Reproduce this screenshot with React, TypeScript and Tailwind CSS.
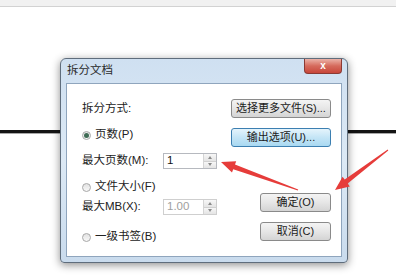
import React from 'react';

const font = { fontFamily: '"Liberation Sans", "Noto Sans CJK SC", sans-serif' };

const WinButton = ({ label, width, active = false }: { label: string; width: string; active?: boolean }) => (
  <div
    className={`${width} h-[19px] flex items-center justify-center rounded-[3px] border text-[11px] leading-none ${
      active
        ? 'border-[#3c7fb1] bg-gradient-to-b from-[#e5f4fc] via-[#c4e5f6] to-[#a9d9f2] text-[#1b1b1b]'
        : 'border-[#8a8a8a] bg-gradient-to-b from-[#f4f4f4] via-[#e6e6e6] to-[#d4d4d4] text-[#1b1b1b]'
    }`}
  >
    {label}
  </div>
);

const Radio = ({ checked = false, label }: { checked?: boolean; label: string }) => (
  <div className="h-[16px] flex items-center gap-[4px] text-[11.5px] text-[#222]">
    <span className="w-[9px] h-[9px] rounded-full border border-[#a8a8a8] bg-gradient-to-b from-[#e2e2e2] to-[#f8f8f8] flex items-center justify-center">
      {checked && <span className="w-[5px] h-[5px] rounded-full bg-[#3f6b55]" />}
    </span>
    <span>{label}</span>
  </div>
);

const SpinBox = ({ value, disabled = false }: { value: string; disabled?: boolean }) => (
  <div
    className={`w-[54px] h-[16px] flex border bg-white ${disabled ? 'border-[#cfcfcf]' : 'border-[#b6b9bf]'}`}
  >
    <div className={`flex-1 flex items-center pl-[3px] text-[11.5px] ${disabled ? 'text-[#a0a0a0]' : 'text-[#111]'}`}>
      {value}
    </div>
    <div className="w-[13px] flex flex-col border-l border-[#d4d4d4]">
      <div className="flex-1 flex items-center justify-center bg-gradient-to-b from-[#f7f7f7] to-[#e4e4e4] border-b border-[#d0d0d0]">
        <span className="w-0 h-0 border-l-[2.5px] border-r-[2.5px] border-b-[3px] border-l-transparent border-r-transparent border-b-[#8a8a8a]" />
      </div>
      <div className="flex-1 flex items-center justify-center bg-gradient-to-b from-[#f7f7f7] to-[#e4e4e4]">
        <span className="w-0 h-0 border-l-[2.5px] border-r-[2.5px] border-t-[3px] border-l-transparent border-r-transparent border-t-[#8a8a8a]" />
      </div>
    </div>
  </div>
);

const FieldRow = ({ label, value, disabled }: { label: string; value: string; disabled?: boolean }) => (
  <div className="h-[16px] flex items-center text-[11.5px] text-[#222]">
    <span className="w-[81px]">{label}</span>
    <SpinBox value={value} disabled={disabled} />
  </div>
);

export default function App() {
  return (
    <div className="relative w-[396px] h-[278px] bg-white overflow-hidden" style={font}>
      <div className="h-[7px] bg-[#f1f1f1] border-b border-[#d2d2d2]" />

      {/* line behind the dialog */}
      <div className="absolute left-0 right-0 top-[130px] flex flex-col">
        <div className="h-[3px] bg-[#141414]" />
        <div className="h-[1px] bg-[#a8a8a8]" />
      </div>

      <div className="relative ml-[60px] mt-[51px] w-[288px] h-[205px] rounded-t-[6px] rounded-b-[4px] border border-[#5f6d7c] bg-gradient-to-b from-[#cfe0f1] via-[#dce9f5] to-[#c9dbed] shadow-[0_2px_8px_rgba(0,0,0,0.45)] flex flex-col">
        <div className="h-[24px] flex items-center justify-between pl-[6px] pr-[5px]">
          <span className="text-[11.5px] text-[#2b2b2b] leading-none">拆分文档</span>
          <div className="self-start w-[38px] h-[15px] rounded-b-[4px] border border-t-0 border-[#8a3a34] bg-gradient-to-b from-[#eab2a8] via-[#d56a5c] to-[#c8463a] flex items-center justify-center">
            <span className="text-white text-[10px] font-bold leading-none">x</span>
          </div>
        </div>

        <div className="mx-[5px] h-[174px] bg-white border border-[#8fa5bd] flex justify-between pl-[15px] pr-[10px]">
          <div className="flex flex-col">
            <div className="mt-[17px] h-[16px] flex items-center text-[11.5px] text-[#222]">拆分方式:</div>
            <div className="mt-[10px]">
              <Radio checked label="页数(P)" />
            </div>
            <div className="mt-[10px]">
              <FieldRow label="最大页数(M):" value="1" />
            </div>
            <div className="mt-[10px]">
              <Radio label="文件大小(F)" />
            </div>
            <div className="mt-[4px]">
              <FieldRow label="最大MB(X):" value="1.00" disabled />
            </div>
            <div className="mt-[14px]">
              <Radio label="一级书签(B)" />
            </div>
          </div>

          <div className="flex flex-col items-end">
            <div className="mt-[15px]">
              <WinButton label="选择更多文件(S)..." width="w-[100px]" />
            </div>
            <div className="mt-[10px]">
              <WinButton label="输出选项(U)..." width="w-[100px]" active />
            </div>
            <div className="mt-[46px]">
              <WinButton label="确定(O)" width="w-[71px]" />
            </div>
            <div className="mt-[10px]">
              <WinButton label="取消(C)" width="w-[71px]" />
            </div>
          </div>
        </div>
      </div>

      {/* red annotation arrows */}
      <svg className="absolute inset-0 pointer-events-none" width="396" height="278" viewBox="0 0 396 278">
        <polygon
          points="221,162 236.2,161.2 235,164.5 298.2,189.5 297.8,190.5 233.2,169.2 232,172.4"
          fill="#e63c3a"
        />
        <polygon
          points="335,190 349.8,186.4 347.7,183.6 388.3,150.4 387.7,149.6 344.7,179.6 342.6,176.8"
          fill="#e63c3a"
        />
      </svg>
    </div>
  );
}
